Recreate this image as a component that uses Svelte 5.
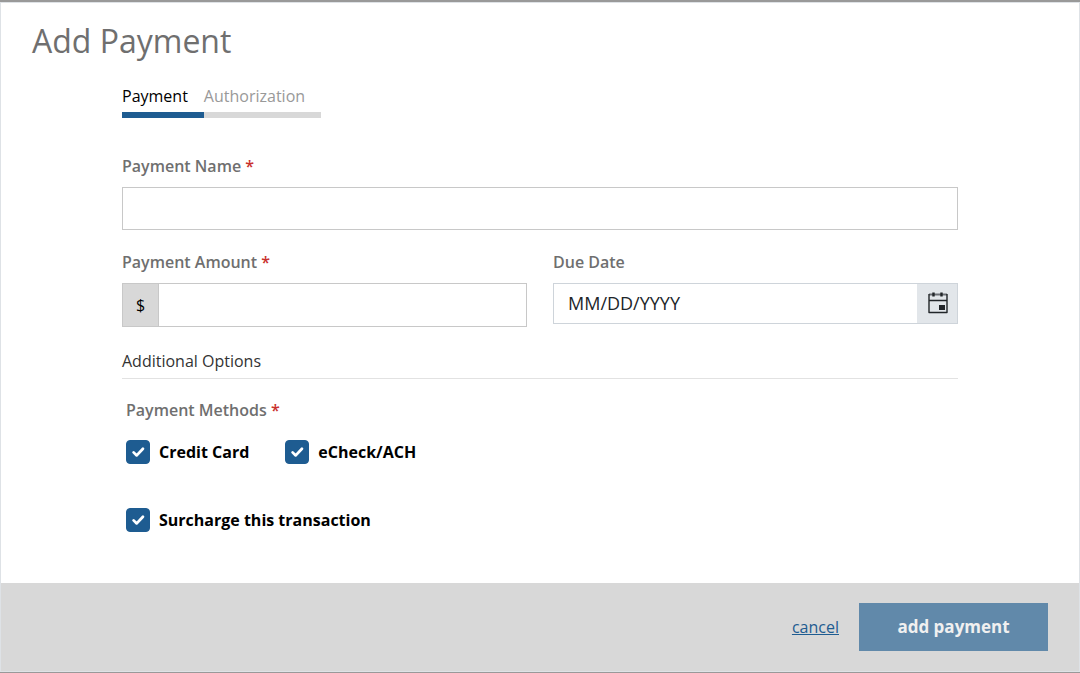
<script>
	const tabs = ["Payment", "Authorization"];

	let activeTab = "Payment";
	let name = "";
	let amount = "";
	let dueDate = "";
	let surcharge = true;
	let methods = [
		{ id: "credit", label: "Credit Card", checked: true },
		{ id: "echeck", label: "eCheck/ACH", checked: true }
	];
</script>

<div class="backdrop">
	<form class="modal" on:submit|preventDefault>
		<h1>Add Payment</h1>
		<div class="content">
			<div class="tabs" role="tablist">
				{#each tabs as tab}
					<button
						type="button"
						role="tab"
						class="tab"
						class:active={tab === activeTab}
						aria-selected={tab === activeTab}
						on:click={() => (activeTab = tab)}
					>{tab}</button>
				{/each}
			</div>

			<div class="field">
				<label for="name">Payment Name <span class="required">*</span></label>
				<input id="name" class="text" type="text" bind:value={name} />
			</div>

			<div class="columns">
				<div class="field">
					<label for="amount">Payment Amount <span class="required">*</span></label>
					<div class="group amount">
						<span class="prefix">$</span>
						<input id="amount" type="text" bind:value={amount} />
					</div>
				</div>
				<div class="field">
					<label for="due">Due Date</label>
					<div class="group date">
						<input id="due" type="text" placeholder="MM/DD/YYYY" bind:value={dueDate} />
						<button type="button" class="calendar" aria-label="Choose date">
							<svg width="20" height="22" viewBox="0 0 20 22" fill="none">
								<path d="M1 2.5H19" stroke="#6b6f74" stroke-width="2" />
								<path d="M1 2V20.5H19V2M1 8.5H19" stroke="#212529" stroke-width="1.4" stroke-linejoin="round" />
								<path d="M5.5 0.5V4.5M13.5 0.5V4.5" stroke="#212529" stroke-width="2.4" />
								<path d="M11 13H17V18H11Z" fill="#212529" />
							</svg>
						</button>
					</div>
				</div>
			</div>

			<h2>Additional Options</h2>

			<fieldset>
				<legend>Payment Methods <span class="required">*</span></legend>
				<div class="methods">
					{#each methods as method (method.id)}
						<label class="check">
							<input type="checkbox" bind:checked={method.checked} />
							<svg width="24" height="24" viewBox="0 0 24 24" fill="none">
								<path d="M7.2 12.4L10.6 15.7L17.4 8.4" />
							</svg>
							{method.label}
						</label>
					{/each}
				</div>
				<label class="check">
					<input type="checkbox" bind:checked={surcharge} />
					<svg width="24" height="24" viewBox="0 0 24 24" fill="none">
						<path d="M7.2 12.4L10.6 15.7L17.4 8.4" />
					</svg>
					Surcharge this transaction
				</label>
			</fieldset>
		</div>

		<footer>
			<a href="#cancel">cancel</a>
			<button type="submit" class="submit">add payment</button>
		</footer>
	</form>
</div>

<style>
	:global(body) {
		background: #ffffff;
	}
	.backdrop {
		--color-blue: #1e5c91;
		--color-grey: #d8d8d8;
		--color-label: #6f6f6f;

		border-top: 2px solid #999999;
		border-bottom: 1px solid #999999;
		color: #000000;
		font-family: "Open Sans", sans-serif;
		font-size: 16px;
		line-height: 24px;
	}
	.backdrop * {
		box-sizing: border-box;
	}
	.modal {
		border: 1px solid #dee2e6;
	}
	input,
	button {
		margin: 0;
		padding: 0;
		border: 0;
		border-radius: 0;
		background: none;
		color: inherit;
		font: inherit;
	}
	button {
		cursor: pointer;
	}
	h1 {
		margin: 0;
		padding: 16px 31px 0;
		color: var(--color-label);
		font-size: 32px;
		font-weight: 400;
		line-height: 44px;
	}
	.content {
		padding: 21px 121px 51px;
	}
	.tabs {
		display: flex;
		margin-bottom: 36px;
	}
	.tab {
		padding: 0 16px 4px 0;
		border-bottom: 6px solid var(--color-grey);
		color: #999999;
	}
	.tab.active {
		border-color: var(--color-blue);
		color: #000000;
	}
	.field label {
		display: block;
		margin-bottom: 9px;
		color: var(--color-label);
		font-weight: 600;
	}
	.required {
		color: #c9302c;
	}
	.text {
		display: block;
		width: 100%;
		height: 43px;
		padding: 0 14px;
		border: 1px solid #c8c8c8;
	}
	.columns {
		display: grid;
		grid-template-columns: 1fr 1fr;
		gap: 26px;
		margin: 20px 0 22px;
	}
	.group {
		display: flex;
		border: 1px solid #ced4da;
	}
	.group input {
		flex: 1;
		min-width: 0;
		padding: 0 14px;
	}
	.amount {
		height: 44px;
		border-color: #c8c8c8;
	}
	.prefix {
		width: 36px;
		border-right: 1px solid #c8c8c8;
		background: var(--color-grey);
		line-height: 42px;
		text-align: center;
	}
	.date {
		height: 41px;
	}
	.date input {
		padding-bottom: 2px;
		font-size: 18px;
	}
	.date input::placeholder {
		color: #212529;
		opacity: 1;
	}
	.calendar {
		display: flex;
		align-items: center;
		justify-content: center;
		width: 40px;
		padding: 0 0 2px 2px;
		background: #e2e6ea;
	}
	h2 {
		margin: 0;
		padding-bottom: 5px;
		border-bottom: 1px solid #e2e2e2;
		color: #333333;
		font-size: 16px;
		font-weight: 400;
	}
	fieldset {
		margin: 19px 0 0;
		padding: 0 4px;
		border: 0;
	}
	legend {
		padding: 0;
		color: var(--color-label);
		font-weight: 600;
	}
	.methods {
		display: flex;
		gap: 36px;
		margin: 18px 0 44px;
	}
	.check {
		display: flex;
		align-items: center;
		gap: 9px;
		font-weight: 700;
		cursor: pointer;
	}
	.check input {
		position: absolute;
		width: 24px;
		height: 24px;
		opacity: 0;
	}
	.check svg {
		flex: none;
		border: 1px solid var(--color-blue);
		border-radius: 4px;
	}
	.check input:checked + svg {
		background: var(--color-blue);
	}
	.check path {
		stroke: #ffffff;
		stroke-width: 3;
		stroke-linecap: round;
		stroke-linejoin: round;
	}
	footer {
		display: flex;
		align-items: center;
		justify-content: flex-end;
		gap: 20px;
		padding: 20px 31px;
		background: var(--color-grey);
	}
	footer a {
		color: var(--color-blue);
		font-weight: 500;
	}
	.submit {
		width: 189px;
		height: 48px;
		background: #6189aa;
		color: #f0f0f0;
		font-size: 17px;
		font-weight: 700;
	}
</style>
